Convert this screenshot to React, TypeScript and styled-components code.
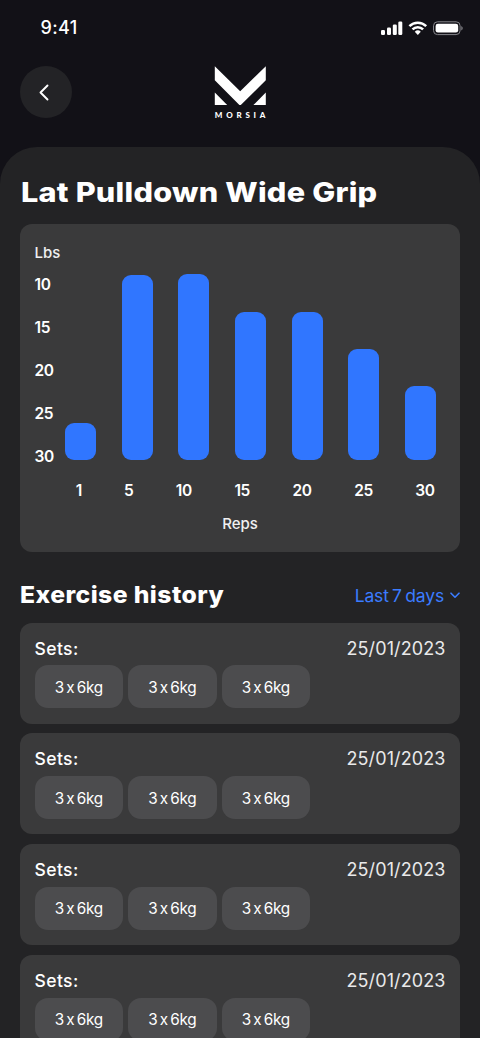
import React from "react";
import styled, { createGlobalStyle } from "styled-components";

const GlobalStyle = createGlobalStyle`
  * { box-sizing: border-box; }
  body { margin: 0; background: #121117; }
  button { font: inherit; color: inherit; border: 0; padding: 0; background: none; }
`;

const Screen = styled.main`
  width: 480px;
  height: 1038px;
  overflow: hidden;
  display: flex;
  flex-direction: column;
  background: #121117;
  color: #fff;
  font-family: Inter, "Liberation Sans", sans-serif;
`;

const StatusBar = styled.header`
  flex: none;
  height: 56px;
  padding: 0 17px 0 40.5px;
  display: flex;
  align-items: center;
  justify-content: space-between;
`;

const Clock = styled.time`
  font-size: 18px;
  font-weight: 500;
  line-height: 24px;
  letter-spacing: 0.4px;
`;

const StatusIcons = styled.svg`
  display: block;
  width: 83px;
  height: 16px;
`;

const NavBar = styled.nav`
  flex: none;
  height: 91px;
  padding: 10px 20px 0;
  display: grid;
  grid-template-columns: 52px 1fr 52px;
  align-items: start;
  justify-items: center;
`;

const BackButton = styled.button`
  width: 52px;
  height: 52px;
  border-radius: 50%;
  background: #232326;
  display: grid;
  place-items: center;

  svg { margin-right: 5px; }
`;

const Brand = styled.div`
  display: flex;
  flex-direction: column;
  align-items: center;
  margin-left: 1px;
`;

const BrandName = styled.span`
  margin: 5px 0 0 3px;
  font: 900 8px/10px Lato, sans-serif;
  letter-spacing: 3.8px;
`;

const Sheet = styled.section`
  flex: 1;
  padding: 0 20px;
  border-radius: 37px 37px 0 0;
  background: #232325;
`;

const Title = styled.h1`
  margin: 0 0 0 0.5px;
  padding: 28px 0 0;
  height: 77px;
  white-space: nowrap;
  font-size: 27px;
  font-weight: 800;
  line-height: 36px;
  letter-spacing: 0.2px;
  transform: scaleX(1.135);
  transform-origin: left;
`;

const ChartCard = styled.section`
  height: 328px;
  padding: 19.4px 14.5px 0;
  border-radius: 12px;
  background: #3a3a3b;
  font-size: 15.5px;
  font-weight: 600;
  line-height: 20px;
  letter-spacing: -0.4px;
`;

const AxisTitle = styled.div<{ $centered?: boolean }>`
  height: 20px;
  color: #f0f0f1;
  font-size: 15px;
  font-weight: 500;
  letter-spacing: 0;
  text-align: ${(p) => (p.$centered ? "center" : "left")};
  margin-top: ${(p) => (p.$centered ? "13px" : "0")};
`;

const Plot = styled.div`
  display: flex;
  height: 198px;
`;

const YAxis = styled.div`
  width: 30.8px;
  padding-top: 12px;
  display: flex;
  flex-direction: column;
  gap: 23px;
`;

const Bars = styled.div`
  display: flex;
  align-items: flex-end;
  gap: 25.7px;
  height: 196.4px;
`;

const Bar = styled.div`
  width: 30.9px;
  border-radius: 9px;
  background: #3076ff;
`;

const XAxis = styled.div`
  display: flex;
  gap: 42.9px;
  margin: 19.6px 0 0 41.5px;
`;

const Tick = styled.span`
  display: flex;
  justify-content: center;
`;

const HistoryHeader = styled.div`
  height: 70.5px;
  padding-top: 15px;
  display: flex;
  align-items: center;
  justify-content: space-between;
`;

const SectionTitle = styled.h2`
  margin: 0 0 0 0.4px;
  white-space: nowrap;
  font-size: 22.5px;
  font-weight: 800;
  line-height: 30px;
  letter-spacing: 0.4px;
  transform: scaleX(1.097);
  transform-origin: left;
`;

const RangeButton = styled.button`
  display: flex;
  align-items: center;
  gap: 6px;
  color: #3b7cff;
  font-size: 17.5px;
  line-height: 24px;
  padding-top: 2px;
  letter-spacing: -0.15px;
  word-spacing: -1.4px;
  white-space: nowrap;
`;

const HistoryList = styled.div`
  display: flex;
  flex-direction: column;
  gap: 9.8px;
`;

const HistoryCard = styled.article`
  height: 101px;
  padding: 14.2px 14.5px 0;
  border-radius: 12px;
  background: #3a3a3b;
`;

const CardHeader = styled.div`
  display: flex;
  justify-content: space-between;
  height: 28.6px;
  font-size: 18px;
  line-height: 24px;
`;

const SetsLabel = styled.span`
  font-size: 17.5px;
  font-weight: 500;
  letter-spacing: 0.4px;
`;

const DateLabel = styled.time`
  color: #e9e9ea;
  letter-spacing: 0.1px;
`;

const Chips = styled.div`
  display: flex;
  gap: 5px;
`;

const Chip = styled.span`
  width: 88.5px;
  height: 43px;
  padding-top: 2px;
  border-radius: 13px;
  background: #4c4c4e;
  display: grid;
  place-items: center;
  font-size: 15.3px;
  line-height: 20px;
  letter-spacing: -0.3px;
  word-spacing: -1.6px;
  white-space: nowrap;
`;

const yLabels = [10, 15, 20, 25, 30];
const bars = [37, 185, 186, 148, 148, 111, 74];
const ticks = [
  { label: "1", width: 5.5 },
  { label: "5", width: 8.5 },
  { label: "10", width: 16 },
  { label: "15", width: 15 },
  { label: "20", width: 19 },
  { label: "25", width: 18 },
  { label: "30", width: 19 },
];
const history = Array.from({ length: 4 }, () => ({
  date: "25/01/2023",
  sets: ["3 x 6kg", "3 x 6kg", "3 x 6kg"],
}));

function DeviceStatus() {
  return (
    <StatusIcons viewBox="0 0 83 16" fill="#fff">
      <rect x="1" y="10" width="4" height="5" rx="1.3" />
      <rect x="7" y="7.5" width="4" height="7.5" rx="1.3" />
      <rect x="12.8" y="4.5" width="4" height="10.5" rx="1.3" />
      <rect x="18.3" y="1.5" width="4" height="13.5" rx="1.3" />
      <g fill="none" stroke="#fff" strokeWidth="2.5">
        <path d="M29.4 6.1a12 12 0 0 1 16.8 0" />
        <path d="M32.5 9.4a7.5 7.5 0 0 1 10.6 0" />
      </g>
      <path d="M34.8 11.7a4.4 4.4 0 0 1 6 0l-3 3.3Z" />
      <rect x="53.5" y="1.8" width="26.6" height="12.8" rx="4" fill="none" stroke="#85858a" />
      <rect x="55.6" y="3.8" width="22.6" height="8.8" rx="2.3" />
      <path d="M81.3 6v4.4c1.8-.8 1.8-3.6 0-4.4Z" fill="#85858a" />
    </StatusIcons>
  );
}

export default function App() {
  return (
    <>
      <GlobalStyle />
      <Screen>
        <StatusBar>
          <Clock>9:41</Clock>
          <DeviceStatus />
        </StatusBar>
        <NavBar>
          <BackButton aria-label="Back">
            <svg width="10" height="17" viewBox="0 0 10 17" fill="none" stroke="#fff" strokeWidth="1.9" strokeLinecap="round" strokeLinejoin="round">
              <path d="M8.5 1.5 1.5 8.5l7 7" />
            </svg>
          </BackButton>
          <Brand>
            <svg width="52" height="39" viewBox="0 0 52 39" fill="#fff">
              <path d="M.8.2 26.2 25.3 51.8.2v14L26.8 39h-1.4L.8 14.2Z" />
              <path d="M.8 26.5 13.2 39H.8ZM51.8 26.5 39.4 39h12.4Z" />
            </svg>
            <BrandName>MORSIA</BrandName>
          </Brand>
        </NavBar>
        <Sheet>
          <Title>Lat Pulldown Wide Grip</Title>
          <ChartCard>
            <AxisTitle>Lbs</AxisTitle>
            <Plot>
              <YAxis>
                {yLabels.map((n) => (
                  <span key={n}>{n}</span>
                ))}
              </YAxis>
              <Bars>
                {bars.map((height, i) => (
                  <Bar key={i} style={{ height }} />
                ))}
              </Bars>
            </Plot>
            <XAxis>
              {ticks.map((t) => (
                <Tick key={t.label} style={{ width: t.width }}>
                  {t.label}
                </Tick>
              ))}
            </XAxis>
            <AxisTitle $centered>Reps</AxisTitle>
          </ChartCard>
          <HistoryHeader>
            <SectionTitle>Exercise history</SectionTitle>
            <RangeButton>
              Last 7 days
              <svg width="10" height="7" viewBox="0 0 10 7" fill="none" stroke="currentColor" strokeWidth="1.6" strokeLinecap="round" strokeLinejoin="round">
                <path d="m1 1.2 4 4 4-4" />
              </svg>
            </RangeButton>
          </HistoryHeader>
          <HistoryList>
            {history.map((entry, i) => (
              <HistoryCard key={i}>
                <CardHeader>
                  <SetsLabel>Sets:</SetsLabel>
                  <DateLabel>{entry.date}</DateLabel>
                </CardHeader>
                <Chips>
                  {entry.sets.map((s, j) => (
                    <Chip key={j}>{s}</Chip>
                  ))}
                </Chips>
              </HistoryCard>
            ))}
          </HistoryList>
        </Sheet>
      </Screen>
    </>
  );
}
